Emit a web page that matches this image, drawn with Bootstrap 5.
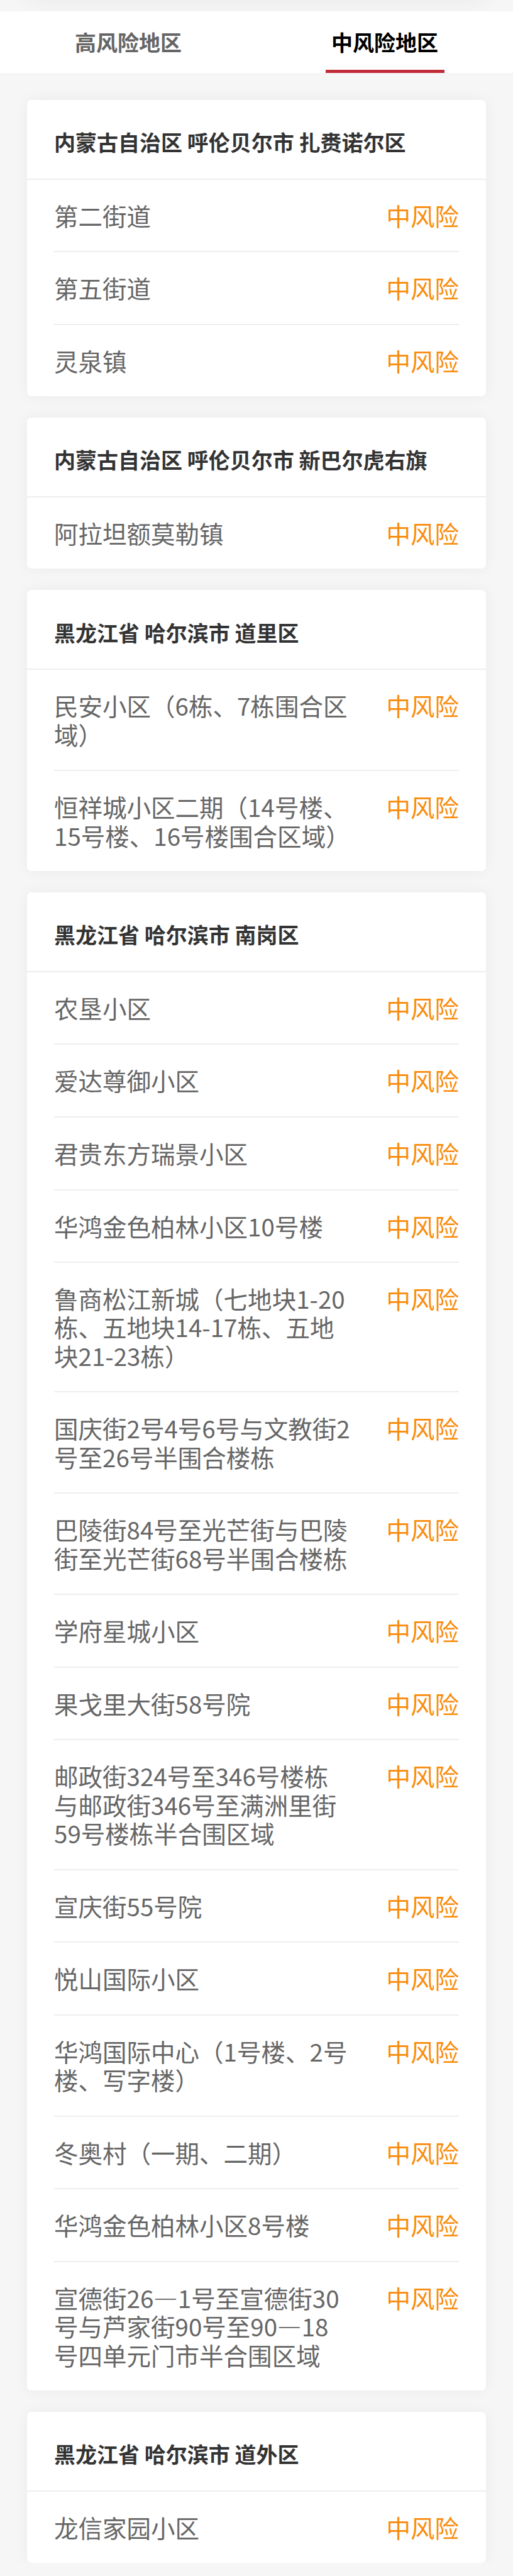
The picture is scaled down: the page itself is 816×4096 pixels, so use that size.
<!DOCTYPE html>
<html lang="zh-CN">
<head>
  <meta charset="UTF-8">
  <meta name="viewport" content="width=device-width, initial-scale=1.0">
  <title>中风险地区</title>
  <link href="https://cdn.jsdelivr.net/npm/bootstrap@5.3.1/dist/css/bootstrap.min.css" rel="stylesheet">
  <style>
    body {
      background: #f6f6f6;
      font-family: "Noto Sans CJK SC", sans-serif;
      line-height: 45.333px;
      overflow: hidden;
    }
    /* shadow of the block that sits above the tabs */
    .top-strip {
      height: 18px;
      padding: 0 43px;
    }
    .top-block {
      height: 60px;
      margin-top: -60px;
      box-shadow: 0 0 34px rgba(0, 0, 0, .055);
    }
    .risk-tabs {
      height: 98px;
      font-size: 34px;
      font-weight: 700;
    }
    .risk-tabs .nav-link {
      width: 189px;
      height: 98px;
      padding: 26px 0 0;
      color: #666;
      border-bottom: 5px solid transparent;
    }
    .risk-tabs .nav-link.active {
      color: #000;
      border-bottom-color: #c02c38;
    }
    .area-list {
      padding: 42.667px 43px 0;
      gap: 34px;
    }
    .area-card {
      border: 0;
      border-radius: 7px;
      box-shadow: 0 0 23px rgba(0, 0, 0, .05);
    }
    .area-title {
      margin: 0;
      padding: 44.3px 43px 35.3px;
      border-bottom: 2px solid #eee;
      color: #333;
      font-size: 34px;
      font-weight: 700;
      line-height: 45.333px;
    }
    .area-rows {
      margin: 0 43px;
      font-size: 38.533px;
    }
    .area-row {
      padding: 34px 0 34.267px;
      border-bottom: 2px solid #eee;
    }
    .area-row:last-child {
      padding-bottom: 34px;
      border-bottom: 0;
    }
    .area-name {
      width: 472.5px;
      color: #666;
    }
    .area-level {
      color: #fa8c0a;
    }
  </style>
</head>
<body>

<div class="top-strip overflow-hidden">
  <div class="top-block"></div>
</div>

<ul class="nav risk-tabs bg-white">
  <li class="nav-item col-6 d-flex justify-content-center"><a class="nav-link text-center">高风险地区</a></li>
  <li class="nav-item col-6 d-flex justify-content-center"><a class="nav-link text-center active">中风险地区</a></li>
</ul>

<div id="area-list" class="area-list d-flex flex-column"></div>

<script src="https://cdn.jsdelivr.net/npm/bootstrap@5.3.1/dist/js/bootstrap.bundle.min.js"></script>
<script>
  const areas = [
    {
      title: "内蒙古自治区 呼伦贝尔市 扎赉诺尔区",
      rows: ["第二街道", "第五街道", "灵泉镇"]
    },
    {
      title: "内蒙古自治区 呼伦贝尔市 新巴尔虎右旗",
      rows: ["阿拉坦额莫勒镇"]
    },
    {
      title: "黑龙江省 哈尔滨市 道里区",
      rows: ["民安小区（6栋、7栋围合区域）", "恒祥城小区二期（14号楼、15号楼、16号楼围合区域）"]
    },
    {
      title: "黑龙江省 哈尔滨市 南岗区",
      rows: [
        "农垦小区",
        "爱达尊御小区",
        "君贵东方瑞景小区",
        "华鸿金色柏林小区10号楼",
        "鲁商松江新城（七地块1-20栋、五地块14-17栋、五地块21-23栋）",
        "国庆街2号4号6号与文教街2号至26号半围合楼栋",
        "巴陵街84号至光芒街与巴陵街至光芒街68号半围合楼栋",
        "学府星城小区",
        "果戈里大街58号院",
        "邮政街324号至346号楼栋与邮政街346号至满洲里街59号楼栋半合围区域",
        "宣庆街55号院",
        "悦山国际小区",
        "华鸿国际中心（1号楼、2号楼、写字楼）",
        "冬奥村（一期、二期）",
        "华鸿金色柏林小区8号楼",
        "宣德街26—1号至宣德街30号与芦家街90号至90—18号四单元门市半合围区域"
      ]
    },
    {
      title: "黑龙江省 哈尔滨市 道外区",
      rows: ["龙信家园小区"]
    }
  ];

  const listEl = document.getElementById("area-list");

  areas.forEach(area => {
    const card = document.createElement("div");
    card.className = "card area-card";
    card.innerHTML = `
      <h2 class="area-title">${area.title}</h2>
      <div class="area-rows">
        ${area.rows.map(name => `
          <div class="area-row d-flex justify-content-between align-items-start">
            <div class="area-name">${name}</div>
            <div class="area-level text-nowrap">中风险</div>
          </div>`).join("")}
      </div>`;
    listEl.appendChild(card);
  });
</script>

</body>
</html>
